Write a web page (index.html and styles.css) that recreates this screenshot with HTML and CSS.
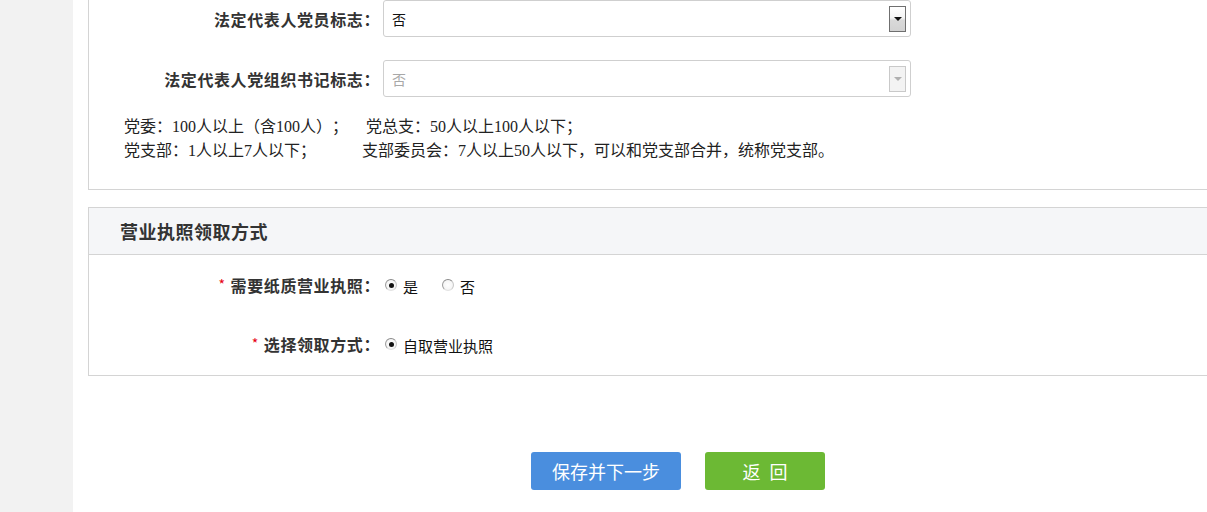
FILE: index.html
```html
<!DOCTYPE html>
<html lang="zh-CN">
<head>
<meta charset="utf-8">
<title>营业执照领取方式</title>
<link rel="stylesheet" href="styles.css">
</head>
<body>
<div class="layout">
  <aside class="sidebar"></aside>
  <main class="main">
    <section class="panel panel-top">
      <div class="form-row">
        <label class="label">法定代表人党员标志：</label>
        <div class="select">
          <span class="select-value">否</span>
          <span class="select-btn"><span class="tri"></span></span>
        </div>
      </div>
      <div class="form-row">
        <label class="label">法定代表人党组织书记标志：</label>
        <div class="select is-disabled">
          <span class="select-value">否</span>
          <span class="select-btn"><span class="tri"></span></span>
        </div>
      </div>
      <div class="note">
        <p class="note-line"><span>党委：100人以上（含100人）；</span><span class="note-gap1">党总支：50人以上100人以下；</span></p>
        <p class="note-line"><span>党支部：1人以上7人以下；</span><span class="note-gap2">支部委员会：7人以上50人以下，可以和党支部合并，统称党支部。</span></p>
      </div>
    </section>

    <section class="panel panel-license">
      <h2 class="panel-head">营业执照领取方式</h2>
      <div class="panel-body">
        <div class="radio-row">
          <label class="label"><span class="req">*</span>需要纸质营业执照：</label>
          <div class="options">
            <span class="option"><span class="radio checked"></span><span class="opt-text">是</span></span>
            <span class="option"><span class="radio"></span><span class="opt-text">否</span></span>
          </div>
        </div>
        <div class="radio-row">
          <label class="label"><span class="req">*</span>选择领取方式：</label>
          <div class="options">
            <span class="option"><span class="radio checked"></span><span class="opt-text">自取营业执照</span></span>
          </div>
        </div>
      </div>
    </section>

    <div class="actions">
      <button class="btn btn-blue">保存并下一步</button>
      <button class="btn btn-green">返&ensp;回</button>
    </div>
  </main>
</div>
</body>
</html>
```

FILE: styles.css
```css
html, body {
  margin: 0;
  padding: 0;
  background: #fff;
  overflow: hidden;
}
body {
  font-family: "Noto Sans CJK SC", "Noto Sans", sans-serif;
  color: #333;
  width: 1207px;
  height: 512px;
  text-spacing-trim: space-all;
}
.layout {
  display: flex;
  height: 512px;
}
.sidebar {
  flex: none;
  width: 73px;
  background: #f2f2f2;
}
.main {
  flex: none;
  width: 1180px;
  padding-left: 15px;
}
.panel {
  box-sizing: border-box;
  width: 1180px;
  border: 1px solid #d4d4d4;
}
.panel-top {
  border-top: none;
  padding-bottom: 26px;
}
.form-row {
  display: flex;
  align-items: center;
  height: 37px;
}
.form-row + .form-row {
  margin-top: 23px;
}
.label {
  flex: none;
  width: 291px;
  margin-right: 3px;
  text-align: right;
  font-size: 16px;
  font-weight: 700;
  letter-spacing: 0.6px;
  color: #333;
  line-height: 20px;
  white-space: nowrap;
}
.select {
  box-sizing: border-box;
  width: 528px;
  height: 37px;
  border: 1px solid #cfcfcf;
  border-radius: 3px;
  display: flex;
  align-items: center;
  justify-content: space-between;
  padding-left: 8px;
  padding-right: 4px;
  background: #fff;
}
.select-value {
  font-size: 14px;
  color: #111;
}
.select-btn {
  box-sizing: border-box;
  width: 17px;
  height: 26px;
  border: 1px solid #6f6f6f;
  background: linear-gradient(#ffffff 0%, #f4f4f4 45%, #d9d9d9 55%, #d2d2d2 100%);
  display: flex;
  justify-content: center;
  padding-top: 10px;
}
.tri {
  width: 0;
  height: 0;
  border-left: 4px solid transparent;
  border-right: 4px solid transparent;
  border-top: 4px solid #111;
}
.is-disabled .select-value {
  color: #a8a8a8;
}
.is-disabled .select-btn {
  border-color: #c9c9c9;
  background: #f3f3f3;
}
.is-disabled .tri {
  border-top-color: #b0b0b0;
}
.note {
  margin-top: 18px;
  padding-left: 35px;
  font-family: "Liberation Serif", "Noto Sans CJK SC", serif;
  font-size: 16px;
  color: #222;
  text-spacing-trim: space-all;
}
.note-line {
  margin: 0;
  line-height: 24px;
  white-space: nowrap;
}
.note-gap1 {
  margin-left: 18px;
}
.note-gap2 {
  margin-left: 46px;
}
.panel-license {
  margin-top: 17px;
}
.panel-head {
  margin: 0;
  height: 46px;
  line-height: 46px;
  background: #f5f6f8;
  border-bottom: 1px solid #d4d4d4;
  padding-left: 31px;
  font-size: 18px;
  font-weight: 700;
  letter-spacing: 0.5px;
  color: #333;
}
.panel-body {
  padding: 11px 0 14px;
}
.radio-row {
  display: flex;
  align-items: center;
  height: 36px;
}
.radio-row + .radio-row {
  margin-top: 23px;
}
.req {
  color: #e60012;
  font-size: 14px;
  font-weight: 400;
  margin-right: 5px;
  vertical-align: 2px;
}
.options {
  display: flex;
  align-items: center;
  padding-left: 2px;
}
.option {
  display: flex;
  align-items: center;
}
.option + .option {
  margin-left: 24px;
}
.radio {
  box-sizing: border-box;
  width: 12px;
  height: 12px;
  margin-top: 2px;
  border-radius: 50%;
  border: 1px solid;
  border-color: #8a8a8a #c8c8c8 #e2e2e2 #9e9e9e;
  background: radial-gradient(circle at 50% 50%, #ffffff 0%, #f6f6f6 60%, #dcdcdc 100%);
  display: flex;
  align-items: center;
  justify-content: center;
}
.radio.checked::after {
  content: "";
  width: 5px;
  height: 5px;
  border-radius: 50%;
  background: #111;
}
.opt-text {
  margin-left: 6px;
  font-size: 15px;
  color: #111;
  position: relative;
  top: 2px;
}
.actions {
  margin-top: 76px;
  display: flex;
  justify-content: center;
  align-items: center;
  gap: 24px;
  width: 1180px;
}
.btn {
  height: 38px;
  border: none;
  border-radius: 3px;
  color: #fff;
  font-family: "Noto Sans CJK SC", sans-serif;
  font-size: 18px;
  font-weight: 400;
  padding: 0;
  cursor: pointer;
}
.btn-blue {
  width: 150px;
  background: #4a8ede;
}
.btn-green {
  width: 120px;
  background: #6cb934;
}
```
